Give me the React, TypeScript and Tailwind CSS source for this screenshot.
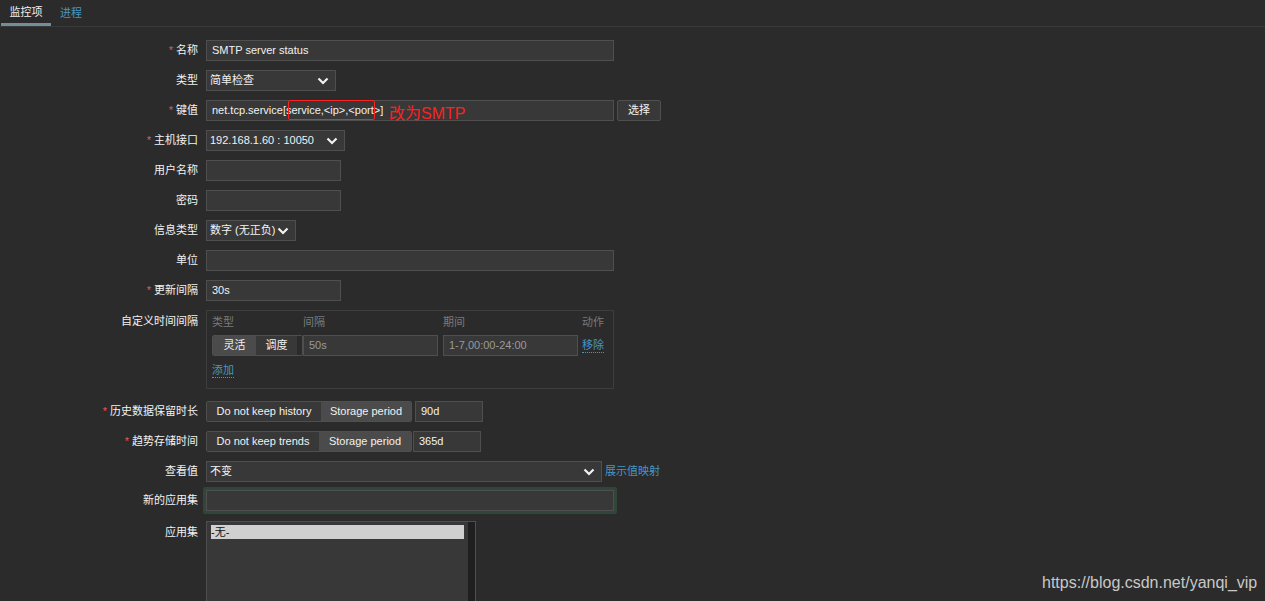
import type { ReactNode } from 'react';

const font = { fontFamily: '"Liberation Sans", "Noto Sans CJK SC", sans-serif' };

function Chevron() {
  return (
    <svg width="12" height="8" viewBox="0 0 12 8" className="shrink-0">
      <polyline points="1.5,1.5 6,6 10.5,1.5" fill="none" stroke="#f2f2f2" strokeWidth="2.2" />
    </svg>
  );
}

function Row({ label, required, children, className = '', top }: { label: string; required?: boolean; children: ReactNode; className?: string; top?: boolean }) {
  return (
    <div className={`flex gap-2 ${top ? 'items-start' : 'items-center'} ${className}`}>
      <div className={`w-[198px] shrink-0 text-right text-[11px] text-[#f2f2f2] ${top ? 'pt-[3px]' : ''}`}>
        {required && <span className="text-[#e45959] mr-[3px]">*</span>}
        {label}
      </div>
      {children}
    </div>
  );
}

function Input({ w, value = '', muted }: { w: string; value?: string; muted?: boolean }) {
  return (
    <div className={`${w} h-[21px] border border-[#4f4f4f] bg-[#383838] px-[5px] flex items-center text-[11px] whitespace-nowrap ${muted ? 'text-[#9a9a9a]' : 'text-[#f2f2f2]'}`}>
      {value}
    </div>
  );
}

function Select({ w, value }: { w: string; value: string }) {
  return (
    <div className={`${w} h-[21px] border border-[#4f4f4f] bg-[#383838] pl-[3px] pr-[6px] flex items-center justify-between text-[11px] text-[#f2f2f2] whitespace-nowrap`}>
      <span>{value}</span>
      <Chevron />
    </div>
  );
}

function Segmented({ items, active, widths }: { items: string[]; active: number; widths: string[] }) {
  return (
    <div className="flex h-[21px] border border-[#4f4f4f] rounded-[2px] overflow-hidden text-[11px] text-[#f2f2f2] whitespace-nowrap">
      {items.map((it, i) => (
        <div key={it} className={`${widths[i]} flex items-center justify-center ${i === active ? 'bg-[#4b4b4b]' : 'bg-[#383838]'}`}>{it}</div>
      ))}
    </div>
  );
}

export default function App() {
  return (
    <div style={font} className="w-[1265px] h-[601px] bg-[#2b2b2b] overflow-hidden relative">
      <div className="flex h-[27px] border-b border-[#383838] text-[11px]">
        <div className="ml-[1px] w-[50px] flex items-center justify-center text-[#f2f2f2] border-b-[3px] border-[#768d99] pt-[2px]">监控项</div>
        <div className="ml-[9px] flex items-center text-[#4796c4]">进程</div>
      </div>

      <div className="pt-[13px]">
        <Row label="名称" required className="mb-[9px]"><Input w="w-[408px]" value="SMTP server status" /></Row>
        <Row label="类型" className="mb-[9px]"><Select w="w-[130px]" value="简单检查" /></Row>
        <Row label="键值" required className="mb-[9px]">
          <div className="flex gap-[3px] relative">
            <Input w="w-[408px]" value="net.tcp.service[service,<ip>,<port>]" />
            <div className="h-[21px] w-[44px] border border-[#4f4f4f] rounded-[2px] bg-[#383838] text-[11px] text-[#f2f2f2] flex items-center justify-center">选择</div>
            <div className="absolute left-[82px] top-0 w-[87px] h-[20px] border border-[#ff2020] rounded-[2px]" />
            <div className="absolute left-[183px] top-[5px] text-[16px] leading-[18px] text-[#ff2020] whitespace-nowrap">改为SMTP</div>
          </div>
        </Row>
        <Row label="主机接口" required className="mb-[9px]"><Select w="w-[139px]" value="192.168.1.60 : 10050" /></Row>
        <Row label="用户名称" className="mb-[9px]"><Input w="w-[135px]" /></Row>
        <Row label="密码" className="mb-[9px]"><Input w="w-[135px]" /></Row>
        <Row label="信息类型" className="mb-[9px]"><Select w="w-[90px]" value="数字 (无正负)" /></Row>
        <Row label="单位" className="mb-[9px]"><Input w="w-[408px]" /></Row>
        <Row label="更新间隔" required className="mb-[9px]"><Input w="w-[135px]" value="30s" /></Row>

        <Row label="自定义时间间隔" top className="mb-[12px]">
          <div className="w-[408px] h-[79px] border border-[#3d3d3d] px-[5px] pt-[4px] text-[11px]">
            <div className="flex text-[#7a7a7a] h-[14px] items-center">
              <div className="w-[91px]">类型</div>
              <div className="w-[140px]">间隔</div>
              <div className="w-[139px]">期间</div>
              <div>动作</div>
            </div>
            <div className="flex items-center mt-[5px] h-[22px]">
              <div className="w-[91px]"><Segmented items={['灵活', '调度']} active={0} widths={['w-[43px]', 'w-[41px]']} /></div>
              <div className="w-[140px]"><Input w="w-[135px]" value="50s" muted /></div>
              <div className="w-[139px]"><Input w="w-[135px]" value="1-7,00:00-24:00" muted /></div>
              <div className="text-[#4796c4] border-b border-dotted border-[#4796c4] leading-[13px] mt-[2px]">移除</div>
            </div>
            <div className="mt-[8px] inline-block text-[#4796c4] border-b border-dotted border-[#4796c4] leading-[13px]">添加</div>
          </div>
        </Row>

        <Row label="历史数据保留时长" required className="mb-[9px]">
          <div className="flex gap-[3px]">
            <Segmented items={['Do not keep history', 'Storage period']} active={1} widths={['w-[114px]', 'w-[90px]']} />
            <Input w="w-[68px]" value="90d" />
          </div>
        </Row>
        <Row label="趋势存储时间" required className="mb-[9px]">
          <div className="flex gap-[1px]">
            <Segmented items={['Do not keep trends', 'Storage period']} active={1} widths={['w-[112px]', 'w-[92px]']} />
            <Input w="w-[68px]" value="365d" />
          </div>
        </Row>
        <Row label="查看值" className="mb-[5px]">
          <Select w="w-[396px]" value="不变" />
          <span className="-ml-[5px] text-[11px] text-[#4796c4]">展示值映射</span>
        </Row>
        <Row label="新的应用集" className="mb-[7px]">
          <div className="-ml-[3px] w-[414px] h-[27px] bg-[#31453a] rounded-[2px] px-[3px] py-[3px]">
            <Input w="w-[408px]" />
          </div>
        </Row>
        <Row label="应用集" top>
          <div className="w-[270px] h-[90px] border border-[#4f4f4f] bg-[#383838] flex">
            <div className="flex-1 pl-[4px] pt-[3px]">
              <div className="h-[14px] bg-[#d0d0d0] text-[11px] leading-[14px] text-[#111]">-无-</div>
            </div>
            <div className="w-[7px] bg-[#1f1f1f] ml-[4px]" />
          </div>
        </Row>
      </div>

      <div className="absolute left-[1042px] top-[571px] text-[16px] text-[#c8c8c8]" style={{ fontFamily: '"Liberation Sans", sans-serif' }}>https://blog.csdn.net/yanqi_vip</div>
    </div>
  );
}
